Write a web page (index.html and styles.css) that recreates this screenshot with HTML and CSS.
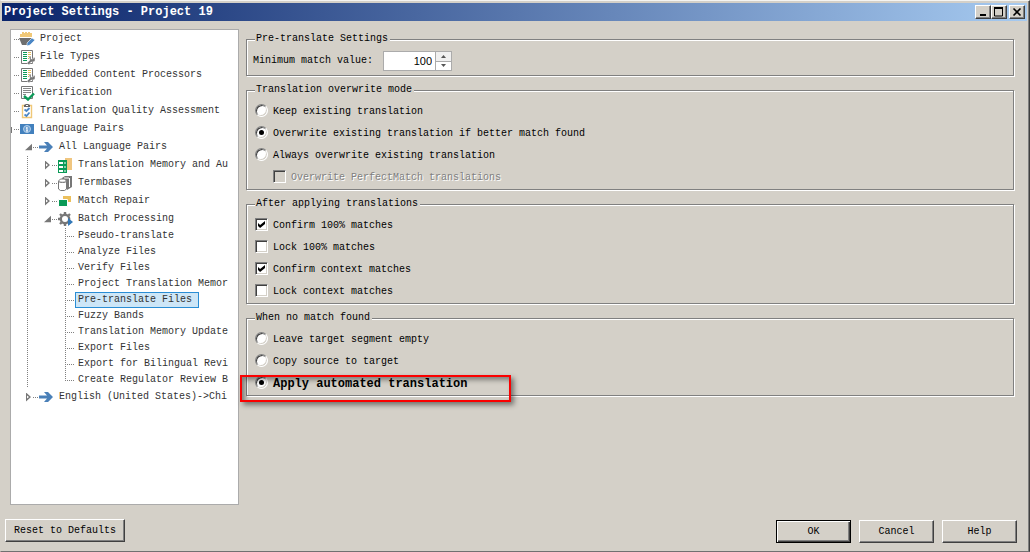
FILE: index.html
```html
<!DOCTYPE html>
<html lang="en">
<head>
    <meta charset="UTF-8">
    <title>Project Settings - Project 19</title>
    <link rel="stylesheet" href="styles.css">
</head>
<body>
    <div class="window">
        <header class="title-bar">
            <h1>Project Settings - Project 19</h1>
            <div class="window-buttons">
                <button type="button" aria-label="Minimize"><svg width="12" height="10"><path d="M3 8h6" stroke="#000" stroke-width="2"/></svg></button>
                <button type="button" aria-label="Maximize"><svg width="12" height="10"><path d="M1.5 1v8h8V1" fill="none" stroke="#000"/><path d="M1 1h9" stroke="#000" stroke-width="2"/></svg></button>
                <button type="button" class="close" aria-label="Close"><svg width="12" height="10"><path d="M2.5 1.5l7 7M9.5 1.5l-7 7" stroke="#000" stroke-width="1.6"/></svg></button>
            </div>
        </header>

        <main class="content">
            <nav class="tree">
                <ul>
                    <li><div class="row"><span class="toggle"></span><span class="dots"></span>
                        <svg class="icon" viewBox="0 0 16 16"><path d="M1 6V3h2V1h2v1h1V1h2v1h1V1h2v1h2v4z" fill="#f0c878"/><path d="M0 7h13v2l-4 5H3z" fill="#6e6e6e"/><path d="M8 12l5-5 3 2-5 5-3 1z" fill="#4a86c5" stroke="#fff" stroke-width=".6"/></svg>
                        <span class="label">Project</span></div></li>
                    <li><div class="row"><span class="toggle"></span><span class="dots"></span>
                        <svg class="icon" viewBox="0 0 16 16"><path d="M2.5 1.5h11v13h-11z" fill="#fff" stroke="#777"/><path d="M4 3.5h4M4 5.5h4M4 7.5h4M4 9.5h4M4 11.5h4" stroke="#0a9a57"/><path d="M9 3.5h3M9 5.5h3M9 7.5h3M9 9.5h1" stroke="#e8bc58"/><path d="M8 14l3-3-1-3 2-1v3h2l1-2 1 1v3l-2 1h-2l-2 3z" fill="#777" stroke="#fff" stroke-width=".4"/></svg>
                        <span class="label">File Types</span></div></li>
                    <li><div class="row"><span class="toggle"></span><span class="dots"></span>
                        <svg class="icon" viewBox="0 0 16 16"><path d="M2.5 1.5h11v13h-11z" fill="#fff" stroke="#777"/><path d="M4 3.5h4M4 5.5h4M4 7.5h4M4 9.5h4M4 11.5h4" stroke="#0a9a57"/><path d="M9 3.5h3M9 5.5h3M9 7.5h3M9 9.5h1" stroke="#e8bc58"/><path d="M8 14l3-3-1-3 2-1v3h2l1-2 1 1v3l-2 1h-2l-2 3z" fill="#777" stroke="#fff" stroke-width=".4"/></svg>
                        <span class="label">Embedded Content Processors</span></div></li>
                    <li><div class="row"><span class="toggle"></span><span class="dots"></span>
                        <svg class="icon" viewBox="0 0 16 16"><path d="M2.5 1.5h11v12h-11z" fill="#fff" stroke="#777"/><path d="M4 3.5h8M4 5.5h8M4 7.5h8M4 9.5h3" stroke="#888"/><path d="M5 11l4 3.500 6-6" fill="none" stroke="#0a9a57" stroke-width="2.400"/></svg>
                        <span class="label">Verification</span></div></li>
                    <li><div class="row"><span class="toggle"></span><span class="dots"></span>
                        <svg class="icon" viewBox="0 0 16 16"><path d="M3.500 2.500h9v12h-9z" fill="#fff" stroke="#f0c878" stroke-width="1.400"/><path d="M5 4V2l2-1h2l2 1v2z" fill="#666"/><path d="M7 2.500h2" stroke="#fff"/><path d="M5.500 6.500l2 1.500 3-3M5.500 11.500l2 1.500 3-3.500" fill="none" stroke="#4a86c5" stroke-width="1.800"/></svg>
                        <span class="label">Translation Quality Assessment</span></div></li>
                    <li><div class="row"><span class="toggle remnant"></span><span class="dots"></span>
                        <svg class="icon" viewBox="0 0 16 16"><path d="M1 3h14v10H1z" fill="#4280bd"/><circle cx="8" cy="8" r="3.500" fill="#6c9fd2" stroke="#b5d0ea"/><path d="M8 6v4M7 7h1M7 10h2" stroke="#fff"/></svg>
                        <span class="label">Language Pairs</span></div>
                        <ul>
                            <li><div class="row"><span class="toggle open"></span><span class="dots"></span>
                                <svg class="icon" viewBox="0 0 16 16"><path d="M1 6.500h8L6 3h4l5 5-5 5H6l3-3.500H1z" fill="#4a80b8"/></svg>
                                <span class="label">All Language Pairs</span></div>
                                <ul class="branch">
                                    <li><div class="row"><span class="toggle closed"></span><span class="dots"></span>
                                        <svg class="icon" viewBox="0 0 16 16"><path d="M8 1h7v12H8z" fill="#f0c680"/><path d="M1 3h9v13H1z" fill="#0a9a57"/><path d="M2 6h4M2 10h4M2 14h4" stroke="#fff" stroke-width="2"/><path d="M7 6h2M7 10h2M7 14h2" stroke="#fff"/></svg>
                                        <span class="label">Translation Memory and Au</span></div></li>
                                    <li><div class="row"><span class="toggle closed"></span><span class="dots"></span>
                                        <svg class="icon" viewBox="0 0 16 16"><path d="M5 3l3-2h7v11l-5 3z" fill="#777"/><path d="M12.500 3v9M7 3h5" stroke="#fff"/><path d="M1.500 6l2-2h4l2 2v8l-2 1.500h-4l-2-1.500z" fill="#fff" stroke="#777"/><path d="M1.500 6c0 2 8 2 8 0" fill="#ddd" stroke="#777"/></svg>
                                        <span class="label">Termbases</span></div></li>
                                    <li><div class="row"><span class="toggle closed"></span><span class="dots"></span>
                                        <svg class="icon" viewBox="0 0 16 16"><path d="M6 3h8v6H6z" fill="#ecc05c"/><path d="M1.500 6.500h9v7h-9z" fill="#0a9a57" stroke="#fff"/></svg>
                                        <span class="label">Match Repair</span></div></li>
                                    <li><div class="row"><span class="toggle open"></span><span class="dots"></span>
                                        <svg class="icon" viewBox="0 0 16 16"><circle cx="8" cy="8" r="4.200" fill="none" stroke="#777" stroke-width="2.400"/><path d="M8 1v2M8 13v2M1 8h2M3 3l1.500 1.500M13 3l-1.500 1.500M3 13l1.500-1.500M13 13l-1.500-1.500" stroke="#777" stroke-width="2.400"/><path d="M11 7l5 4-5 4z" fill="#3278b8"/></svg>
                                        <span class="label">Batch Processing</span></div>
                                        <ul class="leaves">
                                            <li class="leaf"><span class="label">Pseudo-translate</span></li>
                                            <li class="leaf"><span class="label">Analyze Files</span></li>
                                            <li class="leaf"><span class="label">Verify Files</span></li>
                                            <li class="leaf"><span class="label">Project Translation Memor</span></li>
                                            <li class="leaf selected"><span class="label">Pre-translate Files</span></li>
                                            <li class="leaf"><span class="label">Fuzzy Bands</span></li>
                                            <li class="leaf"><span class="label">Translation Memory Update</span></li>
                                            <li class="leaf"><span class="label">Export Files</span></li>
                                            <li class="leaf"><span class="label">Export for Bilingual Revi</span></li>
                                            <li class="leaf"><span class="label">Create Regulator Review B</span></li>
                                        </ul>
                                    </li>
                                </ul>
                            </li>
                            <li><div class="row"><span class="toggle closed"></span><span class="dots"></span>
                                <svg class="icon" viewBox="0 0 16 16"><path d="M1 6.500h8L6 3h4l5 5-5 5H6l3-3.500H1z" fill="#4a80b8"/></svg>
                                <span class="label">English (United States)-&gt;Chi</span></div></li>
                        </ul>
                    </li>
                </ul>
            </nav>

            <form class="settings" id="settings">
                <fieldset>
                    <legend>Pre-translate Settings</legend>
                    <div class="field">
                        <label for="minMatch">Minimum match value:</label>
                        <div class="spinner">
                            <input type="text" id="minMatch" value="100">
                            <div class="spinner-buttons">
                                <button type="button" aria-label="Increase"><svg width="5" height="3"><path d="M0 3l2.500-3L5 3z" fill="#555"/></svg></button>
                                <button type="button" aria-label="Decrease"><svg width="5" height="3"><path d="M0 0l2.500 3L5 0z" fill="#555"/></svg></button>
                            </div>
                        </div>
                    </div>
                </fieldset>
                <fieldset>
                    <legend>Translation overwrite mode</legend>
                    <label class="option"><input type="radio" name="overwrite"><span>Keep existing translation</span></label>
                    <label class="option"><input type="radio" name="overwrite" checked><span>Overwrite existing translation if better match found</span></label>
                    <label class="option"><input type="radio" name="overwrite"><span>Always overwrite existing translation</span></label>
                    <label class="option sub disabled"><input type="checkbox" disabled><span>Overwrite PerfectMatch translations</span></label>
                </fieldset>
                <fieldset>
                    <legend>After applying translations</legend>
                    <label class="option"><input type="checkbox" checked><span>Confirm 100% matches</span></label>
                    <label class="option"><input type="checkbox"><span>Lock 100% matches</span></label>
                    <label class="option"><input type="checkbox" checked><span>Confirm context matches</span></label>
                    <label class="option"><input type="checkbox"><span>Lock context matches</span></label>
                </fieldset>
                <fieldset>
                    <legend>When no match found</legend>
                    <label class="option"><input type="radio" name="nomatch"><span>Leave target segment empty</span></label>
                    <label class="option"><input type="radio" name="nomatch"><span>Copy source to target</span></label>
                    <label class="option marked"><input type="radio" name="nomatch" checked><span>Apply automated translation</span></label>
                </fieldset>
            </form>
        </main>

        <footer class="footer">
            <button type="reset" form="settings" class="btn reset">Reset to Defaults</button>
            <div class="actions">
                <button type="submit" form="settings" class="btn default">OK</button>
                <button type="button" class="btn">Cancel</button>
                <button type="button" class="btn">Help</button>
            </div>
        </footer>
    </div>
</body>
</html>
```
FILE: styles.css
```css
*,
*::before,
*::after {
    box-sizing: border-box;
}

body {
    margin: 0;
    background: #d4d0c8;
    color: #000;
    font-family: "Liberation Mono", monospace;
    font-size: 10px;
    line-height: 14px;
}

button,
input {
    font: inherit;
    color: inherit;
}

ul {
    list-style: none;
    margin: 0;
    padding: 0;
}

.window {
    display: flex;
    flex-direction: column;
    min-height: 100vh;
    padding: 1px 1px 0 0;
    border: 1px solid #d4d0c8;
    border-top-color: #f4f4f2;
    border-right-color: #404040;
    border-bottom-color: #707070;
    box-shadow: inset -1px 0 #808080;
}

/* title bar */
.title-bar {
    display: flex;
    align-items: center;
    justify-content: space-between;
    height: 18px;
    margin: 1px 1px 0;
    padding: 0 2px;
    background: linear-gradient(to right, #0a246a, #a6caf0);
}

.title-bar h1 {
    margin: 0;
    color: #fff;
    font-size: 12px;
    line-height: 16px;
}

.window-buttons {
    display: flex;
}

.window-buttons button {
    display: flex;
    align-items: center;
    justify-content: center;
    width: 16px;
    height: 14px;
    padding: 0;
    background: #d4d0c8;
    border: 1px solid;
    border-color: #fff #404040 #404040 #fff;
    box-shadow: inset -1px -1px #808080;
}

.window-buttons .close {
    margin-left: 2px;
}

/* body of the dialog */
.content {
    display: flex;
    flex: 1;
    gap: 7px;
    padding: 8px 13px 0 9px;
}

.tree {
    width: 229px;
    flex: none;
    padding-right: 9px;
    overflow: hidden;
    background: #fff;
    border: 1px solid #ababab;
    color: #333;
}

.tree > ul {
    margin-left: -5px;
}

.tree ul ul {
    padding-left: 19px;
}

.row {
    display: flex;
    align-items: center;
    height: 18px;
}

.label {
    white-space: nowrap;
}

.toggle {
    flex: none;
    width: 7px;
    height: 9px;
    margin-right: 1px;
}

.toggle.open {
    background: #777;
    clip-path: polygon(100% 15%, 100% 85%, 0 85%);
}

.toggle.closed {
    background: #fff;
}

.toggle.closed::before {
    content: "";
    display: block;
    width: 5px;
    height: 9px;
    margin-left: 1px;
    background: #777;
    clip-path: polygon(evenodd, 0 0, 100% 50%, 0 100%, 0 0, 1px 3px, 3px 50%, 1px 6px, 1px 3px);
}

.toggle.remnant {
    background: linear-gradient(#777, #777) 5px 2px / 1px 6px no-repeat;
}

.dots {
    flex: none;
    width: 5px;
    height: 1px;
    background: repeating-linear-gradient(to right, #808080 0 1px, transparent 1px 2px);
}

.icon {
    flex: none;
    width: 16px;
    height: 16px;
    margin-right: 5px;
}

.branch {
    background: repeating-linear-gradient(#808080 0 1px, transparent 1px 2px) 2px 0 / 1px 100% no-repeat;
}

.tree .leaves {
    background: repeating-linear-gradient(#808080 0 1px, transparent 1px 2px) 21px 0 / 1px calc(100% - 8px) no-repeat;
}

.leaf {
    display: flex;
    align-items: center;
    height: 16px;
    padding-left: 2px;
}

.leaf::before {
    content: "";
    flex: none;
    width: 10px;
    height: 1px;
    background: repeating-linear-gradient(to right, #808080 0 1px, transparent 1px 2px);
}

.leaf .label {
    padding: 0 6px 0 2px;
    border: 1px solid transparent;
}

.leaf.selected .label {
    background: #cde6f7;
    border-color: #2a8dd4;
}

/* settings */
.settings {
    flex: 1;
    display: flex;
    flex-direction: column;
    gap: 7px;
    padding: 3px 1px 0 0;
}

fieldset {
    min-width: 0;
    margin: 0;
    padding: 4px 8px 0;
    border: 1px solid #808080;
    box-shadow: 1px 1px #fff, inset 1px 1px #fff;
}

legend {
    height: 14px;
    padding: 0 2px 0 1px;
    background: #d4d0c8;
}

.field {
    display: flex;
    align-items: center;
    height: 22px;
    gap: 10px;
    margin: 0 0 3px -2px;
}

.spinner {
    display: flex;
    width: 69px;
    height: 20px;
    background: #fff;
    border: 1px solid #ababab;
}

.spinner input {
    flex: 1;
    min-width: 0;
    padding: 0 3px 0 0;
    border: 0;
    background: none;
    text-align: right;
    font-family: "Liberation Sans", Arial, sans-serif;
    font-size: 11px;
}

.spinner-buttons {
    display: flex;
    flex-direction: column;
    width: 16px;
    border-left: 1px solid #ababab;
}

.spinner-buttons button {
    display: flex;
    flex: 1;
    align-items: center;
    justify-content: center;
    padding: 0;
    border: 0;
    background: #fff;
}

.spinner-buttons button:first-child {
    background: #f0f0f0;
    border-bottom: 1px solid #ababab;
}

.option {
    position: relative;
    display: flex;
    align-items: center;
    gap: 5px;
    height: 22px;
}

.option.sub {
    padding-left: 18px;
}

.option input {
    appearance: none;
    flex: none;
    display: flex;
    align-items: center;
    justify-content: center;
    width: 13px;
    height: 13px;
    margin: 0 0 3px;
    background: #fff;
    border: 1px solid;
    border-color: #808080 #fff #fff #808080;
    box-shadow: inset 1px 1px #404040, inset -1px -1px #d4d0c8;
}

.option input[type="radio"] {
    border-radius: 50%;
}

.option input[type="radio"]:checked::before {
    content: "";
    width: 5px;
    height: 5px;
    border-radius: 50%;
    background: #000;
}

.option input[type="checkbox"]:checked::before {
    content: "";
    width: 7px;
    height: 7px;
    background: #000;
    clip-path: polygon(0 30%, 30% 58%, 100% 0, 100% 42%, 30% 100%, 0 72%);
}

.option input:disabled {
    background: #d4d0c8;
}

.option.disabled {
    color: #808080;
    text-shadow: 1px 1px #fff;
}

.option.marked {
    font-size: 12px;
    font-weight: bold;
}

.option.marked::after {
    content: "";
    position: absolute;
    top: 2px;
    left: -15px;
    width: 271px;
    height: 27px;
    border: 2px solid #fb0000;
    box-shadow: 3px 3px 5px rgba(0, 0, 0, 0.45), inset 3px 3px 5px rgba(0, 0, 0, 0.4);
    pointer-events: none;
}

/* buttons at the bottom */
.footer {
    display: flex;
    justify-content: space-between;
    padding: 14px 11px 8px 4px;
}

.btn {
    width: 75px;
    height: 23px;
    padding: 0;
    background: #d4d0c8;
    border: 1px solid;
    border-color: #fff #404040 #404040 #fff;
    box-shadow: inset -1px -1px #808080;
}

.btn.reset {
    width: 120px;
}

.btn.default {
    border-color: #000;
    box-shadow: inset 1px 1px #fff, inset -1px -1px #404040, inset -2px -2px #808080;
}

.actions {
    display: flex;
    gap: 8px;
    padding-top: 1px;
}
```
